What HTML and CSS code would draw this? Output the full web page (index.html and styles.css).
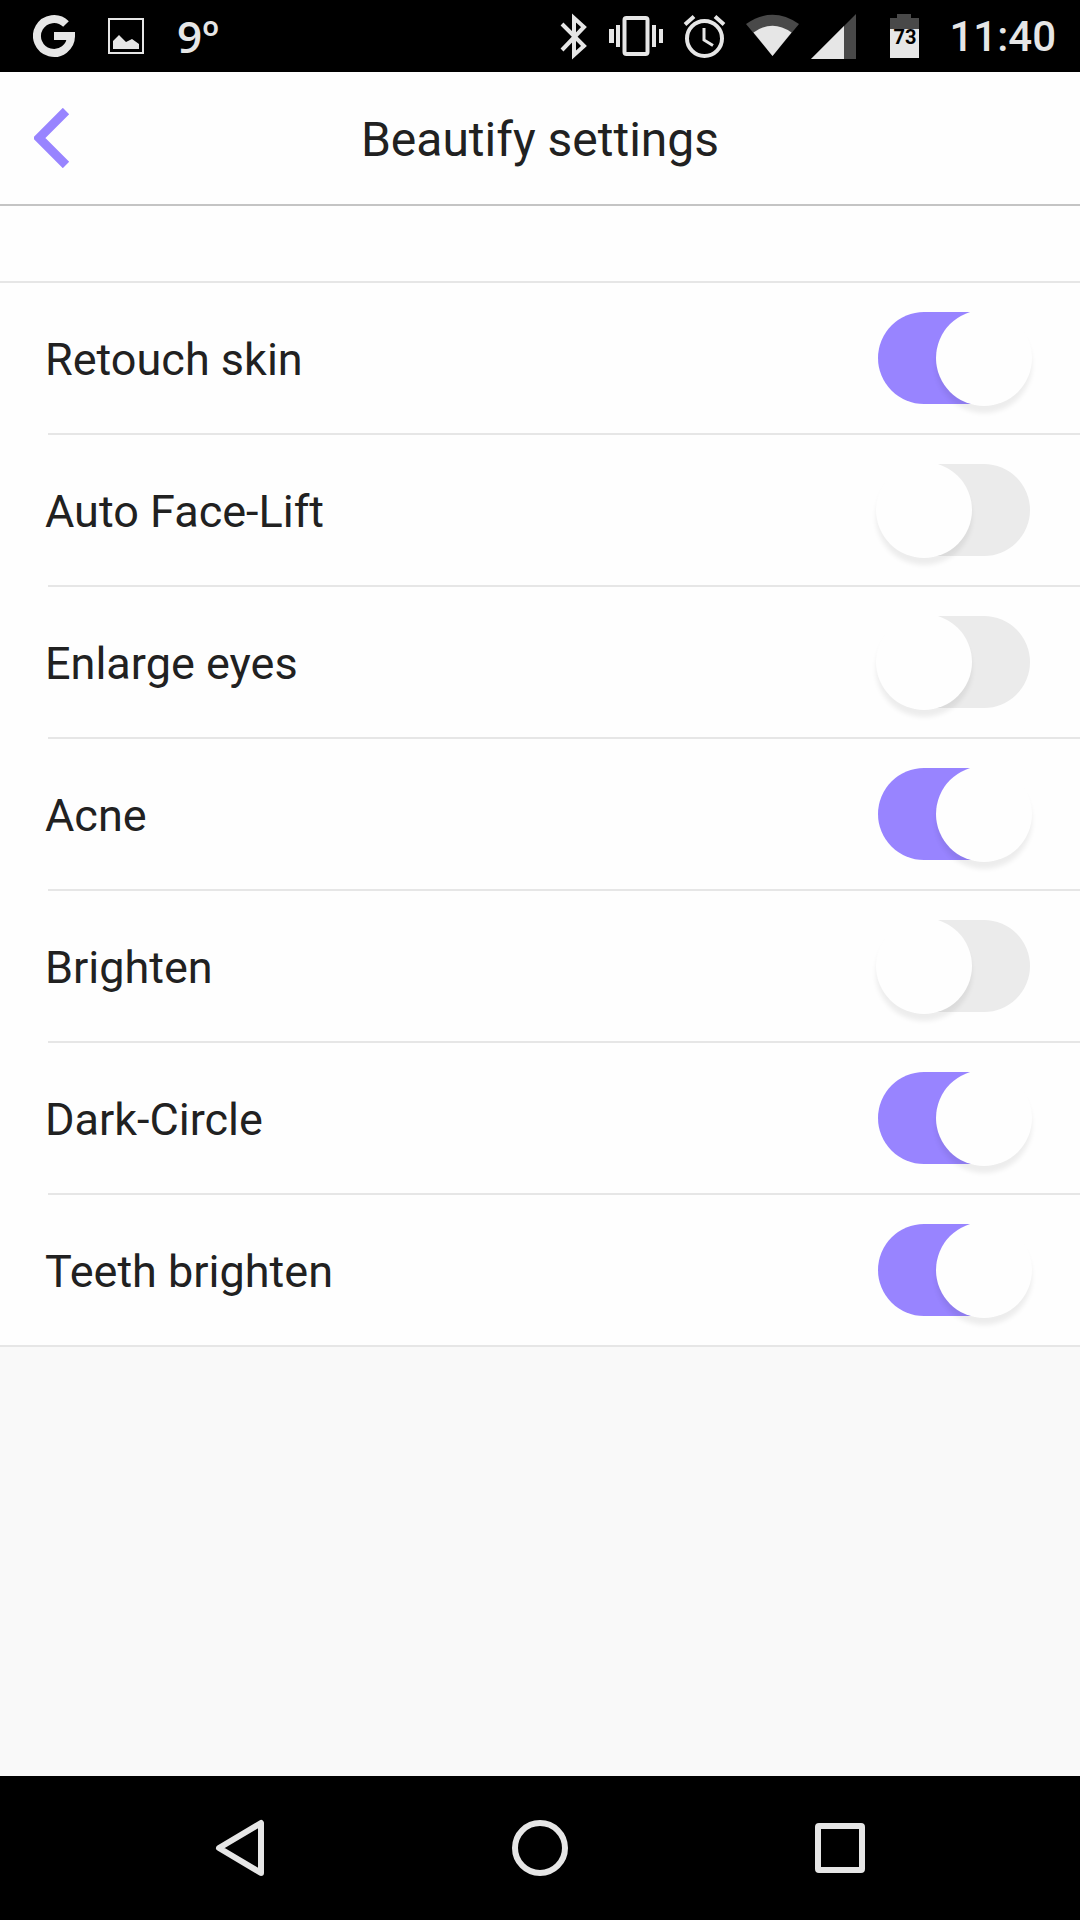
FILE: index.html
```html
<!DOCTYPE html>
<html lang="en">
<head>
    <meta charset="UTF-8">
    <meta name="viewport" content="width=device-width, initial-scale=1.0">
    <title>Beautify settings</title>
    <link rel="stylesheet" href="styles.css">
</head>
<body>
    <div class="status-bar">
        <div class="status-left">
            <svg width="42" height="48" viewBox="0 0 42 48">
                <path d="M33 12A17 17 0 1 0 38 24" fill="none" stroke="#e6e6e6" stroke-width="8"/>
                <path d="M21 20h21v4l-2 4H21z" fill="#e6e6e6"/>
            </svg>
            <svg width="36" height="48" viewBox="0 0 36 48">
                <rect x="1" y="7" width="34" height="34" fill="none" stroke="#e6e6e6" stroke-width="2"/>
                <path d="M5 29l6-6 7 7 6-3 7 5v5H5z" fill="#e6e6e6"/>
            </svg>
            <span class="temperature">9º</span>
        </div>
        <div class="status-right">
            <svg width="38" height="48" viewBox="0 0 38 48">
                <path d="M4 12L26 34L16 43V6L26 15L4 38" fill="none" stroke="#e6e6e6" stroke-width="4"/>
            </svg>
            <svg width="64" height="48" viewBox="0 0 64 48">
                <rect x="18.5" y="6" width="23" height="36" rx="2" fill="none" stroke="#e6e6e6" stroke-width="4"/>
                <path d="M3 17h5v14H3zM10 13h4v22h-4zM46 13h4v22h-4zM53 17h4v14h-4z" fill="#e6e6e6"/>
            </svg>
            <svg width="50" height="48" viewBox="0 0 50 48" fill="none" stroke="#e6e6e6" stroke-width="4">
                <circle cx="24.5" cy="26.5" r="17.5"/>
                <path d="M5 12.500l9-8M44 12.500l-9-8"/>
                <path d="M24 16v12l9 5.500" stroke-width="3"/>
            </svg>
            <svg width="61" height="48" viewBox="0 0 61 48">
                <path d="M32.500 44L6 12Q32.500-6.500 59 12z" fill="#494949"/>
                <path d="M32.500 44L13.500 20.500Q32.500 7 51.500 20.500z" fill="#e6e6e6"/>
            </svg>
            <svg width="46" height="48" viewBox="0 0 46 48">
                <path d="M0 47L45 2v45z" fill="#494949"/>
                <path d="M0 47L33 14v33z" fill="#e6e6e6"/>
            </svg>
            <svg width="72" height="48" viewBox="0 0 72 48">
                <path d="M23 6h7V2h14v4h8v11H23z" fill="#494949"/>
                <path d="M23 17h29v29H23z" fill="#e6e6e6"/>
                <text class="battery-level" x="38" y="32" text-anchor="middle">73</text>
            </svg>
            <span class="clock">11:40</span>
        </div>
    </div>

    <header class="header">
        <button class="back" aria-label="Back">
            <svg width="38" height="60" viewBox="0 0 38 60">
                <path d="M32 3L5 30l27 27" fill="none" stroke="#9884ff" stroke-width="9"/>
            </svg>
        </button>
        <h1>Beautify settings</h1>
    </header>

    <main>
        <ul class="settings">
            <li>
                <label class="setting"><span>Retouch skin</span> <input class="toggle" type="checkbox" checked></label>
            </li>
            <li>
                <label class="setting"><span>Auto Face-Lift</span> <input class="toggle" type="checkbox"></label>
            </li>
            <li>
                <label class="setting"><span>Enlarge eyes</span> <input class="toggle" type="checkbox"></label>
            </li>
            <li>
                <label class="setting"><span>Acne</span> <input class="toggle" type="checkbox" checked></label>
            </li>
            <li>
                <label class="setting"><span>Brighten</span> <input class="toggle" type="checkbox"></label>
            </li>
            <li>
                <label class="setting"><span>Dark-Circle</span> <input class="toggle" type="checkbox" checked></label>
            </li>
            <li>
                <label class="setting"><span>Teeth brighten</span> <input class="toggle" type="checkbox" checked></label>
            </li>
        </ul>
    </main>

    <nav class="nav-bar">
        <button aria-label="Back">
            <svg width="60" height="60" viewBox="0 0 60 60">
                <path d="M51 5v50L9 30z"/>
            </svg>
        </button>
        <button aria-label="Home">
            <svg width="60" height="60" viewBox="0 0 60 60">
                <circle cx="30" cy="30" r="25"/>
            </svg>
        </button>
        <button aria-label="Recent apps">
            <svg width="60" height="60" viewBox="0 0 60 60">
                <rect x="8" y="8" width="44" height="44" rx="1"/>
            </svg>
        </button>
    </nav>
</body>
</html>
```

FILE: styles.css
```css
* {
    box-sizing: border-box;
}
body {
    margin: 0;
    min-height: 100vh;
    display: flex;
    flex-direction: column;
    font-family: Roboto, sans-serif;
    color: #212121;
    background: #f9f9f9;
}
svg {
    display: block;
    flex-shrink: 0;
}
button {
    padding: 0;
    border: none;
    background: none;
    cursor: pointer;
}

/* status bar */
.status-bar {
    display: flex;
    justify-content: space-between;
    align-items: center;
    height: 72px;
    padding: 0 24px 0 33px;
    background: #000;
    color: #e6e6e6;
}
.status-left {
    display: flex;
    align-items: center;
    gap: 33px;
}
.status-right {
    display: flex;
    align-items: center;
    gap: 10px;
}
.temperature {
    font-family: "Open Sans", sans-serif;
    font-size: 44px;
    font-weight: 600;
    line-height: 72px;
}
.clock {
    font-size: 42px;
    font-weight: 500;
    line-height: 72px;
    padding-top: 2px;
}
.battery-level {
    font-size: 20px;
    font-weight: 700;
    fill: #000;
}

/* header */
.header {
    display: grid;
    grid-template-columns: 72px 1fr 72px;
    align-items: center;
    height: 134px;
    border-bottom: 2px solid #c4c4c4;
    background: #fefefe;
}
.header h1 {
    margin: 0;
    padding-top: 2px;
    font-size: 48px;
    font-weight: 400;
    text-align: center;
}
.back {
    justify-self: end;
}

/* settings list */
main {
    flex: 1;
}
.settings {
    margin: 0;
    padding: 75px 0 0;
    list-style: none;
    background: #fefefe;
}
.settings::before,
.settings li::after {
    content: "";
    display: block;
    height: 2px;
    background: #e6e6e6;
}
.settings li::after {
    margin-left: 48px;
}
.settings li:last-child::after {
    margin-left: 0;
}
.setting {
    display: flex;
    justify-content: space-between;
    align-items: center;
    height: 150px;
    padding: 0 50px 0 45px;
    font-size: 45px;
}
.setting span {
    padding-top: 3px;
}
.toggle {
    appearance: none;
    flex-shrink: 0;
    width: 152px;
    height: 92px;
    margin: 0;
    border-radius: 46px;
    background: #ebebeb;
    cursor: pointer;
}
.toggle::before {
    content: "";
    display: block;
    width: 96px;
    height: 96px;
    margin: -2px;
    border-radius: 50%;
    background: #fefefe;
    box-shadow: 0 7px 5px rgba(0, 0, 0, 0.07);
}
.toggle:checked {
    background: #9884ff;
}
.toggle:checked::before {
    margin-left: 58px;
}

/* navigation bar */
.nav-bar {
    display: flex;
    height: 144px;
    padding: 0 90px;
    background: #000;
}
.nav-bar button {
    flex: 1;
    display: flex;
    justify-content: center;
    align-items: center;
}
.nav-bar svg {
    fill: none;
    stroke: #e6e6e6;
    stroke-width: 6px;
    stroke-linejoin: round;
}
```
